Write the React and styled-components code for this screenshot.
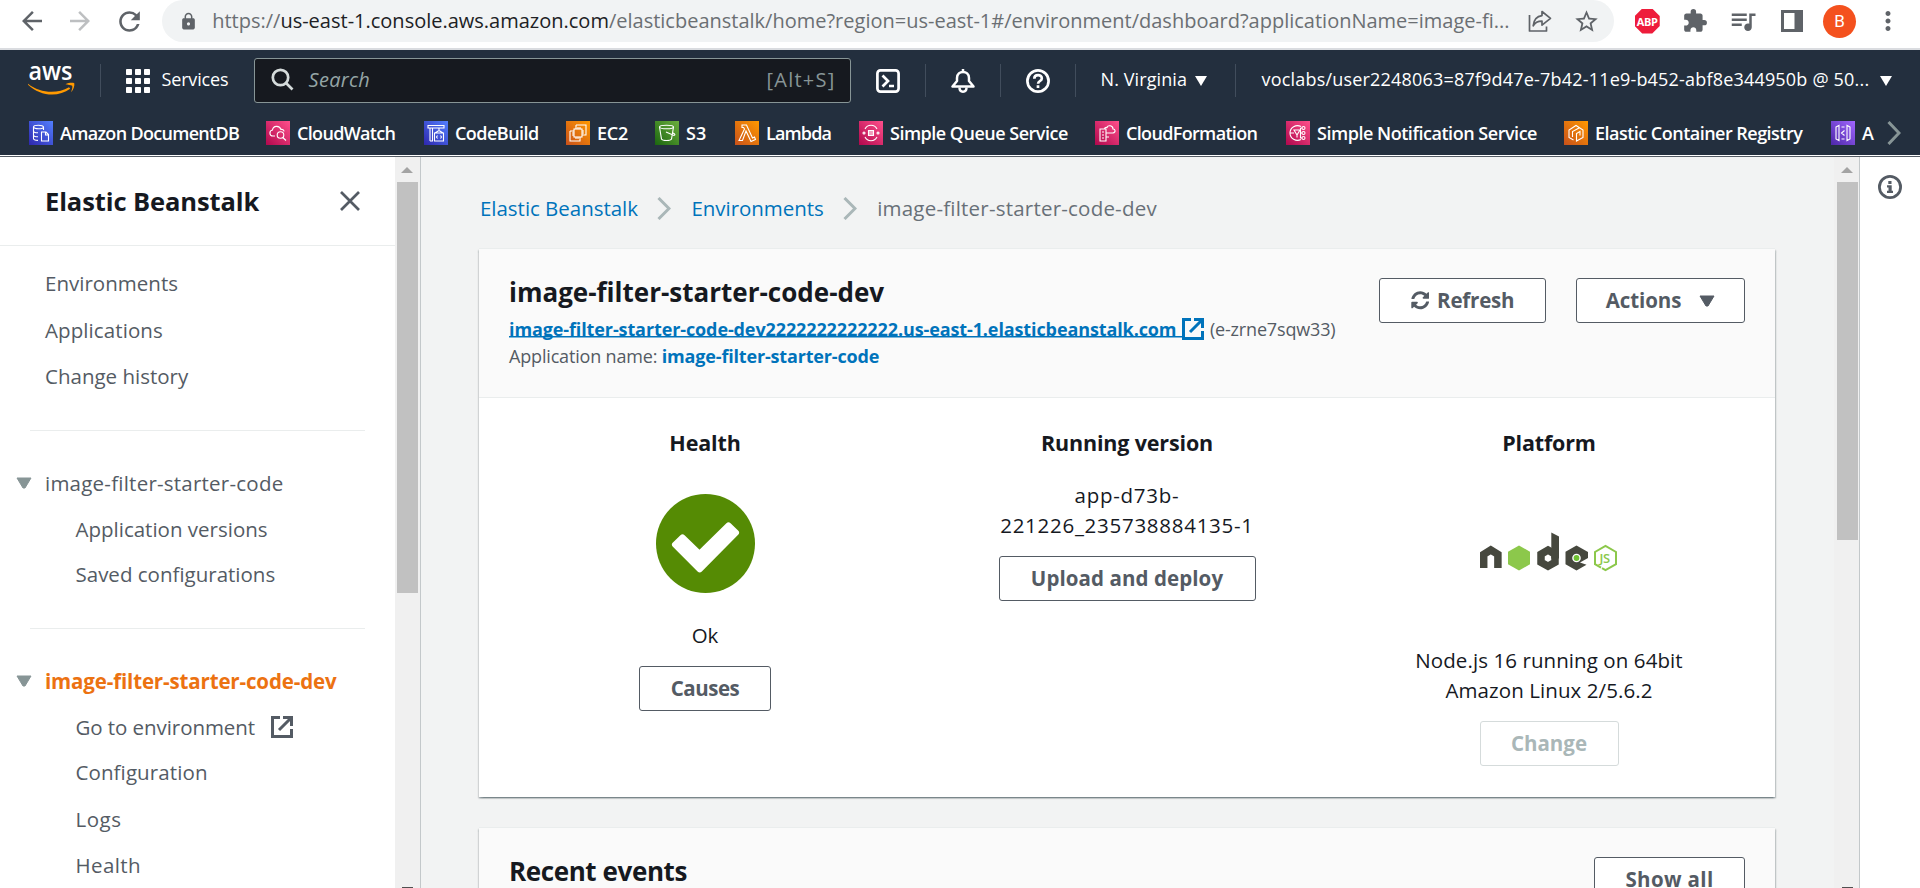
import React from 'react';
import styled, { createGlobalStyle } from 'styled-components';
import {
  MdArrowBack, MdArrowForward, MdRefresh, MdLock, MdStarBorder, MdExtension, MdQueueMusic, MdMoreVert,
} from 'react-icons/md';
import { FaSyncAlt } from 'react-icons/fa';

const GlobalStyle = createGlobalStyle`
  * { box-sizing: border-box; }
  html, body { margin: 0; padding: 0; background: #fff; }
  body { font-family: "Open Sans", "Noto Sans", sans-serif; font-size: 20.5px; color: #16191f; overflow: hidden; }
  svg { display: block; flex: none; }
`;

const Page = styled.div`
  width: 1920px;
  height: 888px;
  display: flex;
  flex-direction: column;
  overflow: hidden;
`;

/* Browser toolbar */
const BrowserBar = styled.div`
  flex: none;
  height: 50px;
  padding: 0 0 6px 17px;
  border-bottom: 2px solid #dadce0;
  display: flex;
  align-items: center;
  color: #5f6368;
`;
const BrowserButton = styled.div`
  width: 30px;
  margin-right: 18.4px;
  color: ${(p) => (p.$dim ? '#bdbfc1' : '#5f6368')};
`;
const AddressBar = styled.div`
  width: 1452px;
  height: 42px;
  border-radius: 21px;
  background: #f1f3f4;
  padding: 0 14px 0 17px;
  display: flex;
  align-items: center;
`;
const Url = styled.div`
  width: 1298px;
  margin-left: 14px;
  font-size: 20px;
  line-height: 40px;
  white-space: nowrap;
  color: #6b6f73;
  b { font-weight: 400; color: #202124; }
`;
const AddressAction = styled.div`
  margin-left: ${(p) => p.$gap}px;
`;
const Extensions = styled.div`
  display: flex;
  margin-left: 9px;
`;
const ExtensionSlot = styled.div`
  width: 48.1px;
  height: 42px;
  display: flex;
  align-items: center;
  justify-content: center;
`;
const Octagon = styled.div`
  width: 25px;
  height: 25px;
  background: #ee1c3b;
  clip-path: polygon(30% 0, 70% 0, 100% 30%, 100% 70%, 70% 100%, 30% 100%, 0 70%, 0 30%);
  color: #fff;
  font: 700 11px/25px "Open Sans", sans-serif;
  letter-spacing: -0.3px;
  text-align: center;
`;
const Avatar = styled.div`
  width: 33px;
  height: 33px;
  border-radius: 50%;
  background: #f4511e;
  color: #fff;
  font: 400 17px/33px Roboto, sans-serif;
  text-align: center;
`;

/* Console header */
const Header = styled.header`
  flex: none;
  height: 107px;
  background: #232f3e;
  border-bottom: 1px solid #545b64;
  box-shadow: inset 0 -1px 0 #fff;
  color: #fff;
`;
const TopRow = styled.div`
  height: 61px;
  display: flex;
  align-items: center;
`;
const Divided = styled.div`
  width: ${(p) => p.$w}px;
  height: 33px;
  padding-left: ${(p) => p.$pad || 0}px;
  border-right: 1.5px solid #414d5c;
  display: flex;
  align-items: center;
  justify-content: ${(p) => (p.$pad ? 'flex-start' : 'center')};
`;
const NavText = styled.span`
  font-size: 18px;
  font-weight: 500;
  line-height: 24px;
  padding-bottom: 3px;
  white-space: nowrap;
  letter-spacing: ${(p) => p.$ls || 0}px;
`;
const ServicesMenu = styled.div`
  width: 153px;
  padding-left: 25px;
  display: flex;
  align-items: center;
  gap: 12px;
`;
const SearchBox = styled.div`
  width: 597px;
  height: 45px;
  border: 1px solid #879596;
  border-radius: 3px;
  background: #16191f;
  padding: 0 14px 2px 16px;
  display: flex;
  align-items: center;
  font-size: 20px;
  color: #879596;
  em { flex: 1; margin-left: 15px; letter-spacing: 0.3px; color: #95a5a6; }
  span { letter-spacing: 1.25px; }
`;
const Account = styled.div`
  flex: 1;
  padding: 0 28px 0 26px;
  display: flex;
  align-items: center;
  justify-content: space-between;
`;
const Favorites = styled.div`
  height: 44px;
  padding-left: 29px;
  display: flex;
  align-items: center;
`;
const Favorite = styled.div`
  flex: 0 0 ${(p) => p.$w}px;
  display: flex;
  align-items: center;
  font-size: 18px;
  font-weight: 600;
  line-height: 24px;
  white-space: nowrap;
  letter-spacing: ${(p) => p.$ls}px;
  span { padding-bottom: 1px; }
`;
const ServiceIcon = styled.div`
  width: 24px;
  height: 24px;
  margin-right: 7px;
  background: linear-gradient(45deg, ${(p) => p.$from}, ${(p) => p.$to});
`;

/* Body */
const Body = styled.div`
  flex: 1;
  min-height: 0;
  display: flex;
`;
const Sidebar = styled.nav`
  width: 395px;
  background: #fff;
  overflow: hidden;
`;
const SidebarHeader = styled.div`
  height: 89px;
  border-bottom: 1px solid #eaeded;
  padding: 0 35px 0 45px;
  display: flex;
  align-items: center;
  justify-content: space-between;
  h1 { margin: 0; padding-bottom: 1px; font-size: 25.5px; line-height: 36px; letter-spacing: -0.1px; }
`;
const NavGroup = styled.div`
  padding: ${(p) => p.$top}px 0 ${(p) => p.$bottom || 0}px;
`;
const Rule = styled.div`
  height: 1px;
  margin: 0 30px;
  background: #eaeded;
`;
const NavItem = styled.div`
  height: ${(p) => p.$h || 45.9}px;
  padding-left: ${(p) => (p.$nested ? 75.5 : 45)}px;
  display: flex;
  align-items: center;
  gap: 16px;
  color: #545b64;
  letter-spacing: ${(p) => p.$ls || 0}px;
  white-space: nowrap;
`;
const NavParent = styled(NavItem)`
  padding-left: 16px;
  gap: 13px;
  color: ${(p) => (p.$active ? '#ec7211' : '#545b64')};
  font-weight: ${(p) => (p.$active ? 700 : 400)};
`;
const Scrollbar = styled.div`
  flex: none;
  width: ${(p) => p.$w}px;
  padding: 10px ${(p) => p.$right}px 0 2px;
  background: #f0f0f0;
  border-right: 1.5px solid #c3c8ca;
  display: flex;
  flex-direction: column;
  align-items: center;
`;
const Thumb = styled.div`
  width: 21px;
  height: ${(p) => p.$h}px;
  margin: 9px 0 auto;
  background: #c1c1c1;
`;
const ArrowTip = styled.div`
  width: 11px;
  height: 1px;
  background: #505050;
`;
const Main = styled.main`
  flex: 1;
  background: #f2f3f3;
  padding: 34px 59px 0 58px;
  overflow: hidden;
`;
const Breadcrumbs = styled.div`
  height: 34px;
  margin-bottom: 23px;
  padding-left: 1px;
  display: flex;
  align-items: center;
  color: #687078;
  white-space: nowrap;
  svg { margin: 0 20px 0 19.5px; }
`;
const Crumb = styled.a`
  color: ${(p) => (p.$current ? '#687078' : '#0073bb')};
  letter-spacing: ${(p) => p.$ls || 0}px;
`;
const Card = styled.section`
  margin-bottom: 30px;
  background: #fff;
  border-top: 1px solid #eaeded;
  box-shadow: 0 1.5px 1.5px rgba(0, 28, 36, 0.3), 1.5px 1.5px 1.5px rgba(0, 28, 36, 0.15), -1.5px 1.5px 1.5px rgba(0, 28, 36, 0.15);
`;
const CardHeader = styled.div`
  height: 149px;
  padding: 29px 30px 0;
  background: #fafafa;
  border-bottom: 1px solid #eaeded;
  display: flex;
  justify-content: space-between;
  h2 { margin: -5px 0 5px; font-size: 26px; line-height: 38px; letter-spacing: ${(p) => p.$ls || 0}px; }
`;
const Detail = styled.div`
  height: 27px;
  display: flex;
  align-items: center;
  font-size: 18px;
  line-height: 27px;
  letter-spacing: -0.17px;
  color: #545b64;
  white-space: pre;
`;
const StrongLink = styled.a`
  color: #0073bb;
  font-weight: 700;
  letter-spacing: ${(p) => p.$ls || 0}px;
`;
const UnderlinedLink = styled(StrongLink)`
  display: flex;
  align-items: center;
  margin-right: 6px;
  span {
    padding-right: 5.5px;
    background: linear-gradient(#0073bb, #0073bb) 0 20px / 100% 1.5px no-repeat;
  }
  svg { margin-bottom: 1px; }
`;
const Actions = styled.div`
  display: flex;
  align-items: flex-start;
  gap: 30px;
`;
const Button = styled.button`
  flex: none;
  width: ${(p) => p.$w}px;
  height: 45px;
  padding: 0 0 2px;
  border: 1.5px solid ${(p) => (p.disabled ? '#d5dbdb' : '#545b64')};
  border-radius: 3px;
  background: #fff;
  display: flex;
  align-items: center;
  justify-content: center;
  gap: ${(p) => p.$gap || 0}px;
  font: 700 20.5px/28px "Open Sans", "Noto Sans", sans-serif;
  letter-spacing: ${(p) => p.$ls || 0}px;
  white-space: nowrap;
  color: ${(p) => (p.disabled ? '#aab7b8' : '#545b64')};
  svg { margin-top: 2px; }
`;
const Summary = styled.div`
  height: 399px;
  padding: 27px 15px 0;
  display: grid;
  grid-template-columns: repeat(3, 1fr);
  text-align: center;
`;
const Column = styled.div`
  display: flex;
  flex-direction: column;
  align-items: center;
  h3 { margin: 0; font-size: 21.5px; line-height: 36px; letter-spacing: -0.15px; }
`;
const Status = styled.div`
  margin: ${(p) => p.$m};
  line-height: 30px;
  letter-spacing: ${(p) => p.$ls || 0}px;
`;
const Artwork = styled.div`
  margin-top: ${(p) => p.$top}px;
`;
const InfoRail = styled.aside`
  width: 60px;
  padding: 18px 0 0 18px;
  background: #fff;
`;

const Caret = ({ w, h, color }) => (
  <svg width={w} height={h} viewBox="0 0 16 12">
    <path d="M1 1h14L9 11H7z" fill={color} stroke={color} strokeLinejoin="round" />
  </svg>
);
const ExternalIcon = ({ color }) => (
  <svg width="22" height="22" viewBox="0 0 22 22" fill="none" stroke={color} strokeWidth="3">
    <path d="M9 1.5H1.5v19h19V13" />
    <path d="M12 1.5h8.5V10" />
    <path d="M20 2L8 14" />
  </svg>
);
const Chevron = () => (
  <svg width="14" height="23" viewBox="0 0 14 23" fill="none" stroke="#aab7b8" strokeWidth="3">
    <path d="M1.500 1l10.500 10.500L1.500 22" />
  </svg>
);
const ScrollArrow = () => (
  <svg width="12" height="6" viewBox="0 0 12 6"><path d="M6 0l6 6H0z" fill="#a3a3a3" /></svg>
);

const favorites = [
  ['Amazon DocumentDB', 237, -0.69, 'blue', <><ellipse cx="9.500" cy="6" rx="5" ry="1.800" /><path d="M4.500 6v11.500c0 1.200 2 1.900 4.500 1.900M14.500 6v3M4.500 10c0 1.200 2 1.800 4.500 1.800M4.500 14c0 1.200 2 1.800 4.500 1.800M12.500 11h4.500l2.500 2.500v6.500h-7zM16.500 11v3h3" /></>],
  ['CloudWatch', 158, -0.67, 'pink', <><path d="M9 15H7c-4 0-4-5.500-.5-6C7 4.500 13.500 4 15 8.500c1.500-.5 3 .5 3 2" /><circle cx="14.500" cy="14" r="3.300" /><path d="M16.800 16.500l3.200 3" /></>],
  ['CodeBuild', 142, -0.54, 'blue', <path d="M4 4.500h16v2.500H4zM6 7v13M8.500 7v13M6 20h3M15 7v3M10.500 12h9v8h-9zM11 12l4-2.500 4 2.500M13.500 14.500l-1 1.500 1 1.500M16.500 14.500l1 1.500-1 1.500" />],
  ['EC2', 89, -0.23, 'orange', <><path d="M10 4h10v10h-2M4 10v10h10v-2M6 10H4M10 4v2" /><rect x="8" y="8" width="8" height="8" /><path d="M10 6v2M12 6v2M14 6v2M10 16v2M12 16v2M14 16v2M6 10h2M6 12h2M6 14h2M16 10h2M16 12h2M16 14h2" /></>],
  ['S3', 80, 0.1, 'green', <><ellipse cx="11.500" cy="6" rx="7" ry="1.800" /><path d="M4.500 6l2 12c1 2 9 2 10 0l2-12M11 11l8 3.500c1.500-.5 1-1.500-1-2.500" /></>],
  ['Lambda', 124, -0.86, 'orange', <path d="M7 4h4.500l6 13 2-1 1 2.500-4.500 2L11 10 7.500 19.500H4L9.500 8 8.500 6.500H7z" />],
  ['Simple Queue Service', 236, -0.5, 'pink', <><path d="M6 8c2.500-5 9.500-5 12 0M6 16c2.500 5 9.500 5 12 0M9.500 9.500h5v5h-5zM11 9.500v5M13 9.500v5" /><circle cx="5" cy="12" r="1" /><circle cx="19" cy="12" r="1" /></>],
  ['CloudFormation', 191, -0.66, 'pink', <path d="M5 8h6v12H5zM7 11h2M7 14h2M7 17h2M11 12h7c3-.5 2.500-4 0-4 0-3.500-5-4.500-6-1.500-1.500-.5-2.500.5-2.500 1.500M11 16h3" />],
  ['Simple Notification Service', 278, -0.47, 'pink', <><path d="M15 5.500C10 3 4 6.500 4 12s6 9 11 6.500M8 9h6l-3 5zM11 14v2.500M4 12h4" /><circle cx="17.500" cy="7" r="1.500" /><circle cx="17.500" cy="12" r="1.500" /><circle cx="17.500" cy="17" r="1.500" /><path d="M14.500 7v10h1.500M14.500 7h1.500M14.500 12h1.500" /></>],
  ['Elastic Container Registry', 267, -0.52, 'orange', <path d="M9.500 19l-4.500-2.500V9l7-4.500L19 9v7.500l-6.500 3.500v-7.500l3.500-2v4M8.500 16v-5.500l6.500-3.500" />],
  ['A', 56, 0, 'purple', <path d="M5 6l3-1.500v15L5 18zM19 6l-3-1.500v15L19 18zM10.500 6h3M10.500 18h3M13.500 9.500L10.500 12l3 2.500" />],
];
const tones = {
  blue: ['#2e27ad', '#527fff'],
  pink: ['#b0084d', '#ff4f8b'],
  orange: ['#c8511b', '#ff9900'],
  green: ['#1b660f', '#6cae3e'],
  purple: ['#4d27a8', '#a166ff'],
};

const AwsLogo = () => (
  <svg width="48" height="62" viewBox="0 -15 48 62">
    <text x="0.500" y="14.800" fontFamily="Open Sans" fontWeight="600" fontSize="25" textLength="44" lengthAdjust="spacingAndGlyphs" fill="#fff">aws</text>
    <path d="M0 18.700c12 9.500 29 10.500 41 3.500l1.200 1.600C30 32.700 12 31.200 0 19.700z" fill="#ff9900" />
    <path d="M37.500 19.200c3-1.500 7-1.800 8.800-1 .5 2.500-.8 6.500-3.300 9 .8-2.500 1.800-5 1.200-6.500-1.200-.8-4.500-1-6.700-1.500z" fill="#ff9900" />
  </svg>
);

const NodeLogo = () => (
  <svg width="138" height="40" viewBox="0 0 138 40">
    <g fill="none" stroke="#46483e" strokeWidth="7.500" strokeLinejoin="miter">
      <path d="M3.700 36V22.300l7.100-4.300 7.100 4.300V36" />
      <path d="M68 18l7 4.200v8L68 34.200l-7-4v-8z" />
    </g>
    <path d="M71.300 0.500l7.700 4v22h-7.700z" fill="#46483e" />
    <path d="M96.500 13.500L108 20v6l-8 4.500 6.500 2.200-10 5.800-11-6.300V19.800z" fill="#46483e" />
    <circle cx="96.500" cy="26" r="4.300" fill="#fff" />
    <circle cx="96.500" cy="26" r="2.900" fill="#6fc232" />
    <path d="M39 13.500l11 6.300v12.400l-11 6.300-11-6.300V19.800z" fill="#8cc84b" />
    <path d="M121 35.700l-6-3.500V20l10.500-6 10.500 6v12.200l-10.500 6-3.500-2" fill="none" stroke="#8cc84b" strokeWidth="2" />
    <text x="119.500" y="30.500" fontFamily="Open Sans" fontWeight="600" fontSize="13" letterSpacing="-0.5" fill="#8cc84b">JS</text>
  </svg>
);

export default function App() {
  return (
    <Page>
      <GlobalStyle />
      <BrowserBar>
        <BrowserButton><MdArrowBack size={30} /></BrowserButton>
        <BrowserButton $dim><MdArrowForward size={30} /></BrowserButton>
        <BrowserButton><MdRefresh size={31} /></BrowserButton>
        <AddressBar>
          <MdLock size={19} />
          <Url>https://<b>us-east-1.console.aws.amazon.com</b>/elasticbeanstalk/home?region=us-east-1#/environment/dashboard?applicationName=image-fi...</Url>
          <AddressAction $gap={17.5}>
            <svg width="24" height="24" viewBox="0 0 24 24" fill="none" stroke="#5f6368" strokeWidth="1.700" strokeLinejoin="round">
              <path d="M1.500 6v16h17v-4.500" />
              <path d="M14 2.500l8.500 6.800-8.500 6.800v-4c-4 0-7 1.200-8.800 4.700.5-5.500 3.500-9.500 8.800-10.200z" />
            </svg>
          </AddressAction>
          <AddressAction $gap={21.5}><MdStarBorder size={27} /></AddressAction>
        </AddressBar>
        <Extensions>
          <ExtensionSlot><Octagon>ABP</Octagon></ExtensionSlot>
          <ExtensionSlot><MdExtension size={26} /></ExtensionSlot>
          <ExtensionSlot><MdQueueMusic size={30} /></ExtensionSlot>
          <ExtensionSlot>
            <svg width="22" height="22" viewBox="0 0 22 22">
              <rect x="1.500" y="1.500" width="19" height="19" fill="none" stroke="#5f6368" strokeWidth="3" />
              <rect x="13.500" y="1" width="8" height="20" fill="#5f6368" />
            </svg>
          </ExtensionSlot>
          <ExtensionSlot><Avatar>B</Avatar></ExtensionSlot>
          <ExtensionSlot><MdMoreVert size={30} /></ExtensionSlot>
        </Extensions>
      </BrowserBar>

      <Header>
        <TopRow>
          <Divided $w={100.5} $pad={27.5}><AwsLogo /></Divided>
          <ServicesMenu>
            <svg width="24" height="24" viewBox="0 0 24 24" fill="#fff">
              {[0, 9, 18].map((y) => [0, 9, 18].map((x) => <rect key={`${x}-${y}`} x={x} y={y} width="6" height="6" rx="0.800" />))}
            </svg>
            <NavText $ls={-0.16}>Services</NavText>
          </ServicesMenu>
          <SearchBox>
            <svg width="23" height="23" viewBox="0 0 23 23" fill="none" stroke="#d5dbdb" strokeWidth="2.700">
              <circle cx="9.500" cy="9.500" r="7.700" /><path d="M15 15l6.500 6.500" />
            </svg>
            <em>Search</em>
            <span>[Alt+S]</span>
          </SearchBox>
          <Divided $w={75}>
            <svg width="24" height="24" viewBox="0 0 24 24" fill="none" stroke="#fff" strokeWidth="2.700">
              <rect x="1.400" y="1.400" width="21.200" height="21.200" rx="3" />
              <path d="M6.500 6.500L12 12l-5.500 5.500M13 17h5" />
            </svg>
          </Divided>
          <Divided $w={75}>
            <svg width="24" height="24" viewBox="0 0 24 24" fill="none" stroke="#fff" strokeWidth="2.500" strokeLinejoin="round">
              <path d="M12 0v3M1.500 17.500h21L18 12V9c0-8-12-8-12 0v3z" />
              <path d="M8.500 18.500c0 5.500 7 5.500 7 0" />
            </svg>
          </Divided>
          <Divided $w={75}>
            <svg width="24" height="24" viewBox="0 0 24 24" fill="none" stroke="#fff" strokeWidth="2.700">
              <circle cx="12" cy="12" r="10.600" />
              <path d="M8.300 9.800c0-4.800 7.500-4.800 7.500-.4 0 2.600-3.700 2.600-3.700 5.300M12 16.300v2.700" />
            </svg>
          </Divided>
          <Divided $w={160} $pad={25}>
            <NavText $ls={0.1}>N. Virginia</NavText>
            <svg width="20" height="10" viewBox="0 0 20 10"><path d="M8 0h12l-6 10z" fill="#fff" /></svg>
          </Divided>
          <Account>
            <NavText $ls={0.19}>voclabs/user2248063=87f9d47e-7b42-11e9-b452-abf8e344950b @ 50...</NavText>
            <svg width="12" height="10" viewBox="0 0 12 10"><path d="M0 0h12L6 10z" fill="#fff" /></svg>
          </Account>
        </TopRow>
        <Favorites>
          {favorites.map(([name, w, ls, tone, art]) => (
            <Favorite key={name} $w={w} $ls={ls}>
              <ServiceIcon $from={tones[tone][0]} $to={tones[tone][1]}>
                <svg width="24" height="24" viewBox="0 0 24 24" fill="none" stroke="#fff" strokeWidth="1.100">{art}</svg>
              </ServiceIcon>
              <span>{name}</span>
            </Favorite>
          ))}
          <svg width="14" height="24" viewBox="0 0 14 24" fill="none" stroke="#879596" strokeWidth="3">
            <path d="M1.500 1l10.500 11L1.500 23" />
          </svg>
        </Favorites>
      </Header>

      <Body>
        <Sidebar>
          <SidebarHeader>
            <h1>Elastic Beanstalk</h1>
            <svg width="20" height="20" viewBox="0 0 20 20" fill="none" stroke="#545b64" strokeWidth="2.700"><path d="M1 1l18 18M19 1L1 19" /></svg>
          </SidebarHeader>
          <NavGroup $top={14} $bottom={30.5}>
            <NavItem $h={46.5} $ls={0.02}>Environments</NavItem>
            <NavItem $h={46.5} $ls={0.09}>Applications</NavItem>
            <NavItem $h={46.5}>Change history</NavItem>
          </NavGroup>
          <Rule />
          <NavGroup $top={29} $bottom={30.8}>
            <NavParent $ls={0.23}><Caret w={16} h={12} color="#879596" />image-filter-starter-code</NavParent>
            <NavItem $nested $h={45.700}>Application versions</NavItem>
            <NavItem $nested $h={45.700}>Saved configurations</NavItem>
          </NavGroup>
          <Rule />
          <NavGroup $top={29}>
            <NavParent $active $ls={-0.15}><Caret w={16} h={12} color="#879596" />image-filter-starter-code-dev</NavParent>
            <NavItem $nested $ls={-0.07} $h={45.500}>Go to environment<ExternalIcon color="#545b64" /></NavItem>
            <NavItem $nested $ls={0.1}>Configuration</NavItem>
            <NavItem $nested $ls={0.5} $h={46.500}>Logs</NavItem>
            <NavItem $nested $ls={0.4}>Health</NavItem>
          </NavGroup>
        </Sidebar>
        <Scrollbar $w={26} $right={3}>
          <ScrollArrow />
          <Thumb $h={411} />
          <ArrowTip />
        </Scrollbar>

        <Main>
          <Breadcrumbs>
            <Crumb $ls={-0.03}>Elastic Beanstalk</Crumb>
            <Chevron />
            <Crumb $ls={-0.05}>Environments</Crumb>
            <Chevron />
            <Crumb $current $ls={0.21}>image-filter-starter-code-dev</Crumb>
          </Breadcrumbs>
          <Card>
            <CardHeader>
              <div>
                <h2>image-filter-starter-code-dev</h2>
                <Detail>
                  <UnderlinedLink $ls={-0.11}>
                    <span>image-filter-starter-code-dev2222222222222.us-east-1.elasticbeanstalk.com</span>
                    <ExternalIcon color="#0073bb" />
                  </UnderlinedLink>
                  (e-zrne7sqw33)
                </Detail>
                <Detail>{'Application name: '}<StrongLink $ls={-0.17}>image-filter-starter-code</StrongLink></Detail>
              </div>
              <Actions>
                <Button $w={167} $gap={8} $ls={-0.2}><FaSyncAlt size={18.500} />Refresh</Button>
                <Button $w={169} $gap={18} $ls={-0.1}>Actions<Caret w={16} h={12} color="#545b64" /></Button>
              </Actions>
            </CardHeader>
            <Summary>
              <Column>
                <h3>Health</h3>
                <Artwork $top={33}>
                  <svg width="99" height="99" viewBox="0 0 99 99">
                    <circle cx="49.500" cy="49.500" r="49.500" fill="#558b04" />
                    <path d="M19 50.700l7.500-7.200 17 16.500L72.500 31.500l7.500 7.200L43.700 75.300z" fill="#fff" stroke="#fff" strokeWidth="6" strokeLinejoin="round" />
                  </svg>
                </Artwork>
                <Status $m="27px 0 16px">Ok</Status>
                <Button $w={132} $ls={-0.5}>Causes</Button>
              </Column>
              <Column>
                <h3>Running version</h3>
                <Status $m="19px 0 16px" $ls={0.73}>app-d73b-<br />221226_235738884135-1</Status>
                <Button $w={257} $ls={0.08}>Upload and deploy</Button>
              </Column>
              <Column>
                <h3>Platform</h3>
                <Artwork $top={71}><NodeLogo /></Artwork>
                <Status $m="73px 0 16px" $ls={0.08}>Node.js 16 running on 64bit<br />Amazon Linux 2/5.6.2</Status>
                <Button $w={139} disabled>Change</Button>
              </Column>
            </Summary>
          </Card>
          <Card>
            <CardHeader $ls={-0.4}>
              <h2>Recent events</h2>
              <Actions><Button $w={151} $ls={0.36}>Show all</Button></Actions>
            </CardHeader>
          </Card>
        </Main>
        <Scrollbar $w={26} $right={1}>
          <ScrollArrow />
          <Thumb $h={358} />
          <ArrowTip />
        </Scrollbar>
        <InfoRail>
          <svg width="24" height="24" viewBox="0 0 24 24">
            <circle cx="12" cy="12" r="10.600" fill="none" stroke="#545b64" strokeWidth="2.800" />
            <path d="M10.300 6h3.200v3h-3.200zM9 10.300h4.700v5.500H15V18H9v-2.200h1.500v-3.300H9z" fill="#545b64" />
          </svg>
        </InfoRail>
      </Body>
    </Page>
  );
}
